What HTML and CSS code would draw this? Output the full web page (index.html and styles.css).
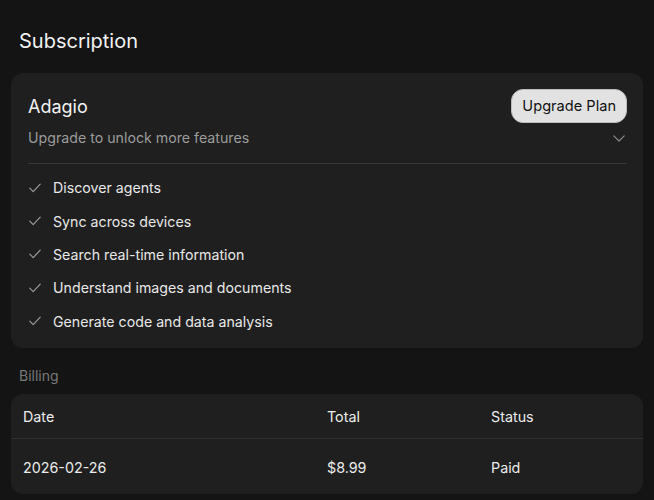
FILE: index.html
```html
<!DOCTYPE html>
<html lang="en">
<head>
<meta charset="utf-8">
<title>Subscription</title>
<link rel="stylesheet" href="styles.css">
</head>
<body>
<main class="page">
  <h1 class="page-title">Subscription</h1>

  <section class="card plan">
    <div class="plan-head">
      <h2 class="plan-name">Adagio</h2>
      <button class="upgrade-btn" type="button">Upgrade Plan</button>
    </div>
    <div class="plan-sub">
      <span>Upgrade to unlock more features</span>
      <svg class="chevron" width="12" height="7" viewBox="0 0 12 7" aria-hidden="true">
        <path d="M0.8 0.8 L6 6 L11.2 0.8" fill="none" stroke="currentColor" stroke-width="1.2" stroke-linecap="round" stroke-linejoin="round"/>
      </svg>
    </div>
    <hr class="divider">
    <ul class="features">
      <li><svg class="check" width="12" height="10" viewBox="0 0 12 10" aria-hidden="true"><path d="M0.8 5.2 L4.2 8.6 L11.2 1.2" fill="none" stroke="currentColor" stroke-width="1.2" stroke-linecap="round" stroke-linejoin="round"/></svg>Discover agents</li>
      <li><svg class="check" width="12" height="10" viewBox="0 0 12 10" aria-hidden="true"><path d="M0.8 5.2 L4.2 8.6 L11.2 1.2" fill="none" stroke="currentColor" stroke-width="1.2" stroke-linecap="round" stroke-linejoin="round"/></svg>Sync across devices</li>
      <li><svg class="check" width="12" height="10" viewBox="0 0 12 10" aria-hidden="true"><path d="M0.8 5.2 L4.2 8.6 L11.2 1.2" fill="none" stroke="currentColor" stroke-width="1.2" stroke-linecap="round" stroke-linejoin="round"/></svg>Search real-time information</li>
      <li><svg class="check" width="12" height="10" viewBox="0 0 12 10" aria-hidden="true"><path d="M0.8 5.2 L4.2 8.6 L11.2 1.2" fill="none" stroke="currentColor" stroke-width="1.2" stroke-linecap="round" stroke-linejoin="round"/></svg>Understand images and documents</li>
      <li><svg class="check" width="12" height="10" viewBox="0 0 12 10" aria-hidden="true"><path d="M0.8 5.2 L4.2 8.6 L11.2 1.2" fill="none" stroke="currentColor" stroke-width="1.2" stroke-linecap="round" stroke-linejoin="round"/></svg>Generate code and data analysis</li>
    </ul>
  </section>

  <h3 class="section-label">Billing</h3>

  <section class="card billing">
    <div class="billing-row billing-head">
      <span>Date</span>
      <span>Total</span>
      <span>Status</span>
    </div>
    <div class="billing-row">
      <span>2026-02-26</span>
      <span>$8.99</span>
      <span>Paid</span>
    </div>
  </section>
</main>
</body>
</html>
```

FILE: styles.css
```css
* {
  box-sizing: border-box;
}

html, body {
  margin: 0;
  background: #141414;
}

body {
  font-family: "Inter", "Noto Sans", sans-serif;
  color: #f0f0f0;
  -webkit-font-smoothing: antialiased;
}

.page {
  padding: 0 11px;
}

.page-title {
  margin: 0;
  padding: 27px 0 0 8px;
  font-size: 20px;
  font-weight: 400;
  line-height: 28px;
  color: #f2f2f2;
}

.card {
  background: #1f1f1f;
  border-radius: 12px;
}

.plan {
  margin-top: 18px;
  padding: 16px 16px 10px 17px;
}

.plan-head {
  display: flex;
  align-items: center;
  justify-content: space-between;
}

.plan-name {
  margin: 0;
  font-size: 18px;
  font-weight: 400;
  color: #f2f2f2;
}

.upgrade-btn {
  height: 34px;
  padding: 0 10px;
  border: 1px solid #bdbdbd;
  border-radius: 12px;
  background: #e2e2e2;
  color: #111;
  font-family: inherit;
  font-size: 14.6px;
  font-weight: 400;
}

.plan-sub {
  display: flex;
  align-items: center;
  justify-content: space-between;
  margin-top: 4px;
  font-size: 14.2px;
  line-height: 22px;
  color: #9b9b9b;
}

.chevron {
  color: #8a8a8a;
  margin-right: 2px;
}

.divider {
  margin: 14px 0 0;
  border: 0;
  height: 1px;
  background: #393939;
}

.features {
  list-style: none;
  margin: 0;
  padding: 7px 0 0;
}

.features li {
  display: flex;
  align-items: center;
  height: 33.4px;
  font-size: 14.2px;
  color: #e8e8e8;
}

.check {
  color: #9a9a9a;
  margin: 0 12px 0 1px;
  flex: none;
}

.section-label {
  margin: 0;
  padding: 18px 0 0 8px;
  font-size: 14px;
  font-weight: 400;
  line-height: 20px;
  color: #787878;
}

.billing {
  margin-top: 8px;
  overflow: hidden;
}

.billing-row {
  display: grid;
  grid-template-columns: 304px 164px 1fr;
  align-items: center;
  padding: 2px 12px 0;
  height: 55px;
  font-size: 14.3px;
  color: #ececec;
}

.billing-head {
  height: 45px;
  border-bottom: 1px solid #303030;
}
```
